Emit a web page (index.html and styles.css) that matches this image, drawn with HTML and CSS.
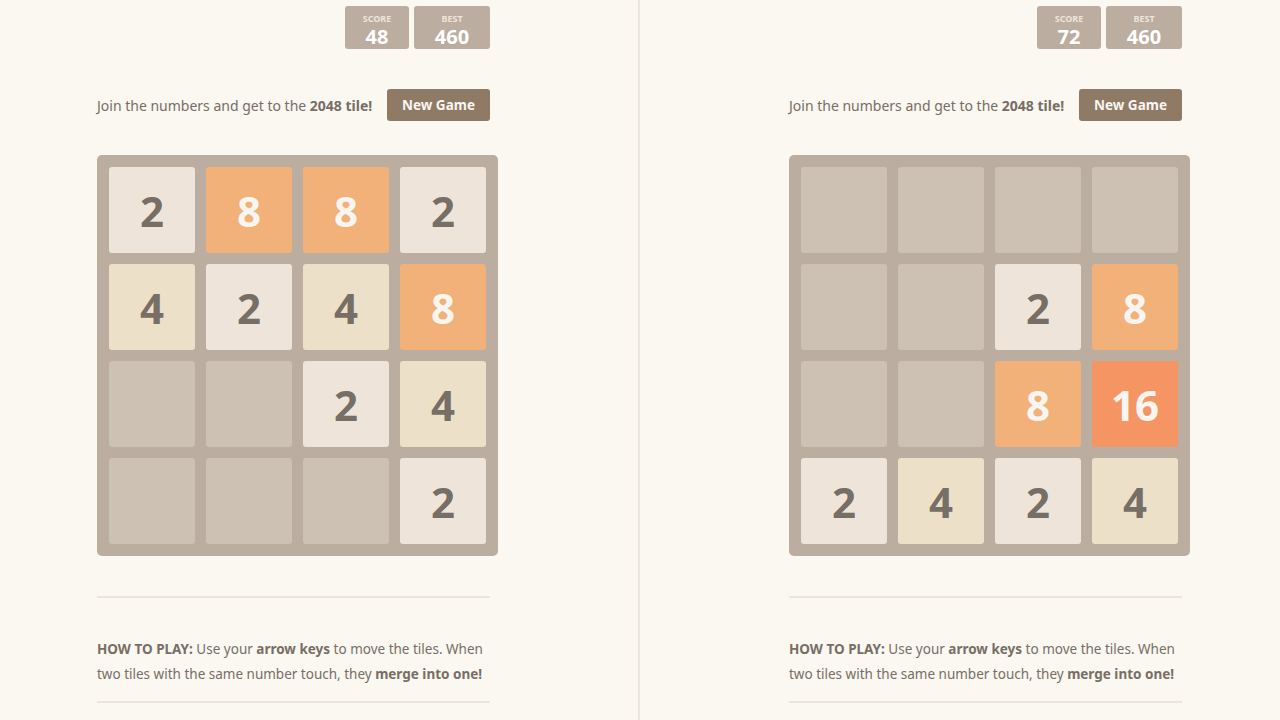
FILE: index.html
```html
<!DOCTYPE html>
<html>
<head>
<meta charset="utf-8">
<link rel="stylesheet" href="styles.css">
</head>
<body>
<div class="panes">
  <div class="pane pane-left">
    <div class="container">
      <div class="heading">
        <div class="score-box score"><div class="label">SCORE</div><div class="value">48</div></div>
        <div class="score-box best"><div class="label">BEST</div><div class="value">460</div></div>
      </div>
      <div class="above-game">
        <p class="intro">Join the numbers and get to the <strong>2048 tile!</strong></p>
        <a class="restart">New Game</a>
      </div>
      <div class="board">
        <div class="cell t2">2</div><div class="cell t8">8</div><div class="cell t8">8</div><div class="cell t2">2</div>
        <div class="cell t4">4</div><div class="cell t2">2</div><div class="cell t4">4</div><div class="cell t8">8</div>
        <div class="cell"></div><div class="cell"></div><div class="cell t2">2</div><div class="cell t4">4</div>
        <div class="cell"></div><div class="cell"></div><div class="cell"></div><div class="cell t2">2</div>
      </div>
      <hr class="rule rule-top">
      <p class="explain"><strong>HOW TO PLAY:</strong> Use your <strong>arrow keys</strong> to move the tiles. When two tiles with the same number touch, they <strong>merge into one!</strong></p>
      <hr class="rule rule-bottom">
    </div>
  </div>
  <div class="pane pane-right">
    <div class="container">
      <div class="heading">
        <div class="score-box score"><div class="label">SCORE</div><div class="value">72</div></div>
        <div class="score-box best"><div class="label">BEST</div><div class="value">460</div></div>
      </div>
      <div class="above-game">
        <p class="intro">Join the numbers and get to the <strong>2048 tile!</strong></p>
        <a class="restart">New Game</a>
      </div>
      <div class="board">
        <div class="cell"></div><div class="cell"></div><div class="cell"></div><div class="cell"></div>
        <div class="cell"></div><div class="cell"></div><div class="cell t2">2</div><div class="cell t8">8</div>
        <div class="cell"></div><div class="cell"></div><div class="cell t8">8</div><div class="cell t16">16</div>
        <div class="cell t2">2</div><div class="cell t4">4</div><div class="cell t2">2</div><div class="cell t4">4</div>
      </div>
      <hr class="rule rule-top">
      <p class="explain"><strong>HOW TO PLAY:</strong> Use your <strong>arrow keys</strong> to move the tiles. When two tiles with the same number touch, they <strong>merge into one!</strong></p>
      <hr class="rule rule-bottom">
    </div>
  </div>
</div>
</body>
</html>
```
FILE: styles.css
```css
html, body {
  margin: 0;
  padding: 0;
  background: #faf8f1;
  color: #776e65;
  font-family: "Noto Sans", "DejaVu Sans", sans-serif;
  font-size: 14px;
  overflow: hidden;
}
.panes {
  display: flex;
  width: 1280px;
  height: 720px;
}
.pane {
  height: 720px;
  box-sizing: border-box;
}
.pane-left {
  width: 640px;
  padding-left: 97px;
  border-right: 2px solid #ebe5dd;
}
.pane-right {
  width: 640px;
  padding-left: 149px;
}
.container {
  width: 393px;
}
.heading {
  display: flex;
  justify-content: flex-end;
  gap: 5px;
  margin-top: 6px;
}
.score-box {
  background: #bbada0;
  border-radius: 3px;
  height: 43px;
  box-sizing: border-box;
  padding-top: 7px;
  text-align: center;
  color: #fff;
}
.score { width: 64px; }
.best { width: 76px; }
.label {
  font-size: 9px;
  font-weight: 700;
  color: #eee4da;
  line-height: 11px;
}
.value {
  font-size: 20px;
  font-weight: 700;
  line-height: 22px;
  margin-top: 2px;
}
.above-game {
  display: flex;
  justify-content: space-between;
  align-items: center;
  margin-top: 40px;
  height: 32px;
}
.intro {
  margin: 0;
  font-size: 14px;
}
.restart {
  display: block;
  background: #8f7a66;
  color: #f9f6f2;
  border-radius: 3px;
  width: 103px;
  height: 32px;
  line-height: 32px;
  text-align: center;
  font-weight: 700;
  font-size: 13.5px;
}
.board {
  margin-top: 34px;
  width: 401px;
  height: 401px;
  box-sizing: border-box;
  padding: 12px;
  background: #bbada0;
  border-radius: 5px;
  display: grid;
  grid-template-columns: repeat(4, 86px);
  grid-template-rows: repeat(4, 86px);
  gap: 11px;
}
.cell {
  background: #cdc1b4;
  border-radius: 3px;
  display: flex;
  align-items: center;
  justify-content: center;
  font-size: 42px;
  font-weight: 700;
  color: #776e65;
}
.t2 { background: #eee4da; }
.t4 { background: #ede0c8; }
.t8 { background: #f2b179; color: #f9f6f2; }
.t16 { background: #f59563; color: #f9f6f2; }
.rule {
  border: 0;
  border-top: 2px solid #ebe5dd;
  margin: 0;
}
.rule-top { margin-top: 40px; }
.explain {
  margin: 39px 0 14px;
  line-height: 25px;
  font-size: 13.5px;
}
```
